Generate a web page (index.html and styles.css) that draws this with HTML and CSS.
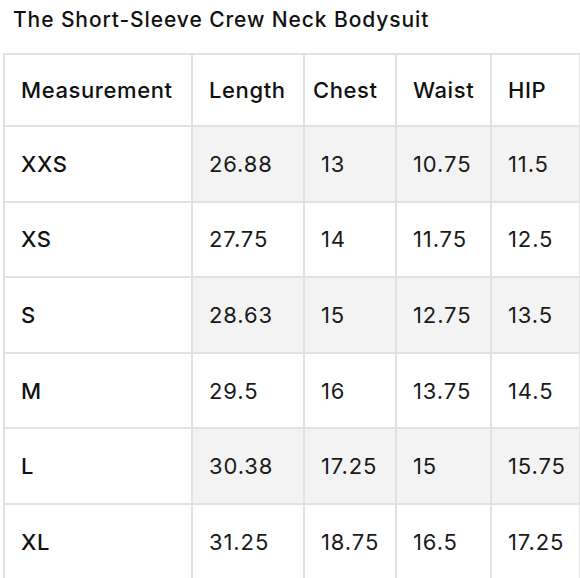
FILE: index.html
```html
<!DOCTYPE html>
<html>
<head>
<meta charset="utf-8">
<link rel="stylesheet" href="styles.css">
</head>
<body>
<h1 class="title">The Short-Sleeve Crew Neck Bodysuit</h1>
<table class="size-table">
  <colgroup>
    <col class="c1"><col class="c2"><col class="c3"><col class="c4"><col class="c5">
  </colgroup>
  <thead>
    <tr class="head">
      <th>Measurement</th><th>Length</th><th class="chest">Chest</th><th>Waist</th><th>HIP</th>
    </tr>
  </thead>
  <tbody>
    <tr class="shade"><th>XXS</th><td>26.88</td><td>13</td><td>10.75</td><td>11.5</td></tr>
    <tr><th>XS</th><td>27.75</td><td>14</td><td>11.75</td><td>12.5</td></tr>
    <tr class="shade"><th>S</th><td>28.63</td><td>15</td><td>12.75</td><td>13.5</td></tr>
    <tr><th>M</th><td>29.5</td><td>16</td><td>13.75</td><td>14.5</td></tr>
    <tr class="shade"><th>L</th><td>30.38</td><td>17.25</td><td>15</td><td>15.75</td></tr>
    <tr><th>XL</th><td>31.25</td><td>18.75</td><td>16.5</td><td>17.25</td></tr>
  </tbody>
</table>
</body>
</html>
```
FILE: styles.css
```css
html, body {
  margin: 0;
  padding: 0;
  background: #fff;
}
body {
  font-family: Inter, "Noto Sans", sans-serif;
  color: #111;
  width: 580px;
  overflow: hidden;
}
.title {
  margin: 0;
  padding: 5px 0 0 13px;
  height: 53px;
  box-sizing: border-box;
  font-size: 21px;
  font-weight: 500;
  line-height: 30px;
  letter-spacing: 0.9px;
}
.size-table {
  margin-left: 3px;
  border-collapse: collapse;
  table-layout: fixed;
  width: 576px;
  border: 2px solid #e1e1e1;
}
.c1 { width: 188px; }
.c2 { width: 112px; }
.c3 { width: 92px; }
.c4 { width: 95px; }
.c5 { width: 89px; }
.size-table th,
.size-table td {
  border: 2px solid #e1e1e1;
  padding: 0 0 0 16px;
  text-align: left;
  vertical-align: middle;
  font-size: 22px;
  white-space: nowrap;
}
.size-table th {
  font-weight: 500;
  color: #111;
  letter-spacing: 0.6px;
}
.size-table td {
  font-weight: 400;
  color: #1a1a1a;
  letter-spacing: 0.9px;
}
.head th {
  height: 70px;
}
.head th.chest {
  padding-left: 8px;
}
tbody tr th,
tbody tr td {
  height: 73.6px;
}
.shade td {
  background: #f3f3f3;
}
```
